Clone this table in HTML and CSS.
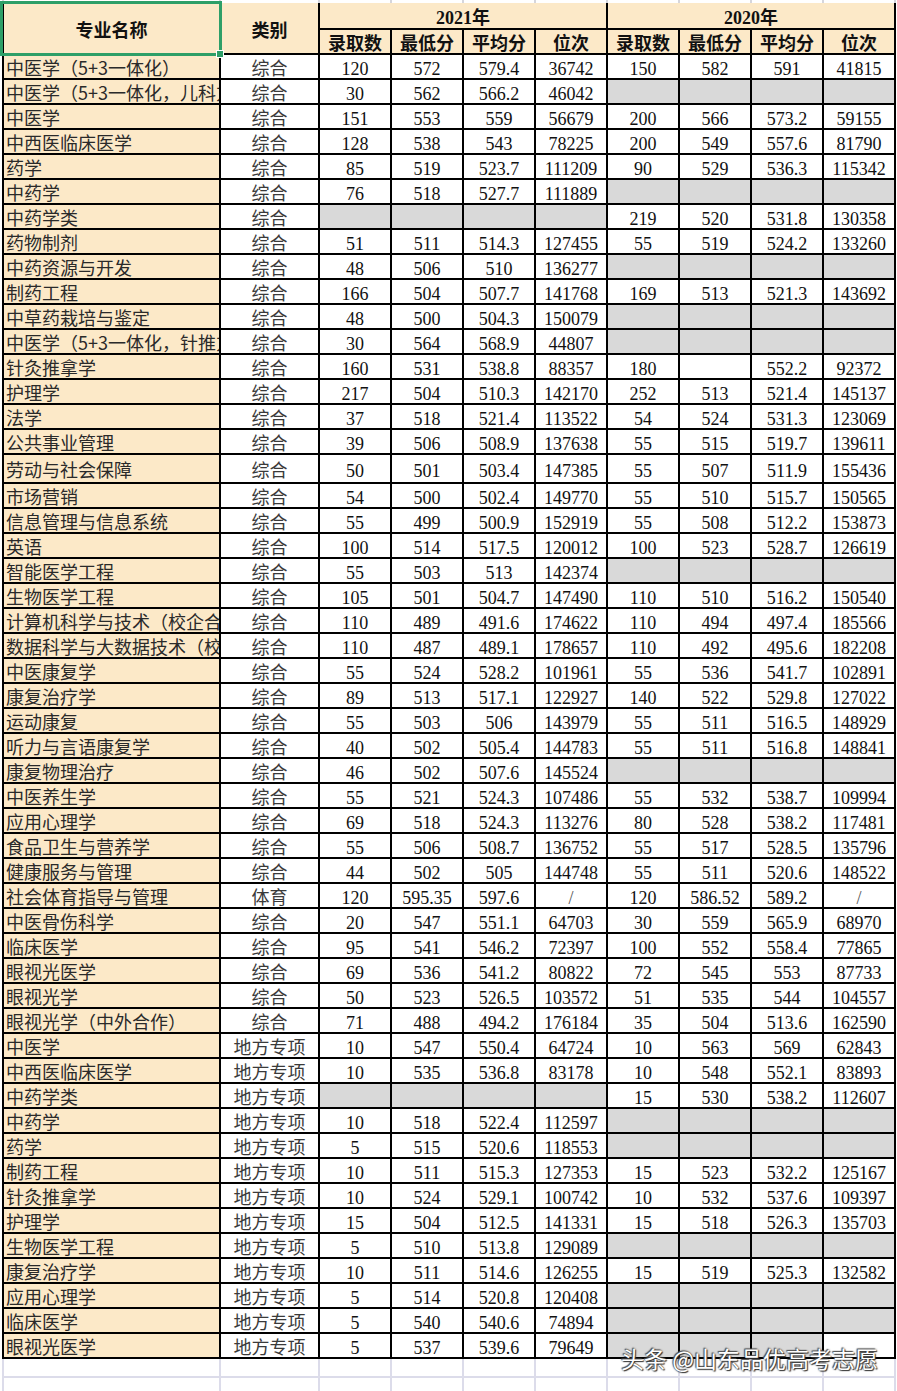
FILE: index.html
```html
<!DOCTYPE html>
<html lang="zh-CN">
<head>
<meta charset="utf-8">
<title>录取分数</title>
<link rel="stylesheet" href="styles.css">
</head>
<body>
<div class="sheet">
  <div class="edge-top"><div></div><div></div><div></div><div></div><div></div><div></div><div></div><div></div><div></div><div></div></div>
  <div class="table">
    <div class="hd r2">专业名称</div>
    <div class="hd r2">类别</div>
    <div class="hd c4">2021年</div>
    <div class="hd c4">2020年</div>
    <div class="hd">录取数</div><div class="hd">最低分</div><div class="hd">平均分</div><div class="hd">位次</div>
    <div class="hd">录取数</div><div class="hd">最低分</div><div class="hd">平均分</div><div class="hd">位次</div>

    <div class="n">中医学（5+3一体化）</div><div class="t">综合</div><div>120</div><div>572</div><div>579.4</div><div>36742</div><div>150</div><div>582</div><div>591</div><div>41815</div>
    <div class="n">中医学（5+3一体化，儿科方向）</div><div class="t">综合</div><div>30</div><div>562</div><div>566.2</div><div>46042</div><div class="g"></div><div class="g"></div><div class="g"></div><div class="g"></div>
    <div class="n">中医学</div><div class="t">综合</div><div>151</div><div>553</div><div>559</div><div>56679</div><div>200</div><div>566</div><div>573.2</div><div>59155</div>
    <div class="n">中西医临床医学</div><div class="t">综合</div><div>128</div><div>538</div><div>543</div><div>78225</div><div>200</div><div>549</div><div>557.6</div><div>81790</div>
    <div class="n">药学</div><div class="t">综合</div><div>85</div><div>519</div><div>523.7</div><div>111209</div><div>90</div><div>529</div><div>536.3</div><div>115342</div>
    <div class="n">中药学</div><div class="t">综合</div><div>76</div><div>518</div><div>527.7</div><div>111889</div><div class="g"></div><div class="g"></div><div class="g"></div><div class="g"></div>
    <div class="n">中药学类</div><div class="t">综合</div><div class="g"></div><div class="g"></div><div class="g"></div><div class="g"></div><div>219</div><div>520</div><div>531.8</div><div>130358</div>
    <div class="n">药物制剂</div><div class="t">综合</div><div>51</div><div>511</div><div>514.3</div><div>127455</div><div>55</div><div>519</div><div>524.2</div><div>133260</div>
    <div class="n">中药资源与开发</div><div class="t">综合</div><div>48</div><div>506</div><div>510</div><div>136277</div><div class="g"></div><div class="g"></div><div class="g"></div><div class="g"></div>
    <div class="n">制药工程</div><div class="t">综合</div><div>166</div><div>504</div><div>507.7</div><div>141768</div><div>169</div><div>513</div><div>521.3</div><div>143692</div>
    <div class="n">中草药栽培与鉴定</div><div class="t">综合</div><div>48</div><div>500</div><div>504.3</div><div>150079</div><div class="g"></div><div class="g"></div><div class="g"></div><div class="g"></div>
    <div class="n">中医学（5+3一体化，针推方向）</div><div class="t">综合</div><div>30</div><div>564</div><div>568.9</div><div>44807</div><div class="g"></div><div class="g"></div><div class="g"></div><div class="g"></div>
    <div class="n">针灸推拿学</div><div class="t">综合</div><div>160</div><div>531</div><div>538.8</div><div>88357</div><div>180</div><div></div><div>552.2</div><div>92372</div>
    <div class="n">护理学</div><div class="t">综合</div><div>217</div><div>504</div><div>510.3</div><div>142170</div><div>252</div><div>513</div><div>521.4</div><div>145137</div>
    <div class="n">法学</div><div class="t">综合</div><div>37</div><div>518</div><div>521.4</div><div>113522</div><div>54</div><div>524</div><div>531.3</div><div>123069</div>
    <div class="n">公共事业管理</div><div class="t">综合</div><div>39</div><div>506</div><div>508.9</div><div>137638</div><div>55</div><div>515</div><div>519.7</div><div>139611</div>
    <div class="n">劳动与社会保障</div><div class="t">综合</div><div>50</div><div>501</div><div>503.4</div><div>147385</div><div>55</div><div>507</div><div>511.9</div><div>155436</div>
    <div class="n">市场营销</div><div class="t">综合</div><div>54</div><div>500</div><div>502.4</div><div>149770</div><div>55</div><div>510</div><div>515.7</div><div>150565</div>
    <div class="n">信息管理与信息系统</div><div class="t">综合</div><div>55</div><div>499</div><div>500.9</div><div>152919</div><div>55</div><div>508</div><div>512.2</div><div>153873</div>
    <div class="n">英语</div><div class="t">综合</div><div>100</div><div>514</div><div>517.5</div><div>120012</div><div>100</div><div>523</div><div>528.7</div><div>126619</div>
    <div class="n">智能医学工程</div><div class="t">综合</div><div>55</div><div>503</div><div>513</div><div>142374</div><div class="g"></div><div class="g"></div><div class="g"></div><div class="g"></div>
    <div class="n">生物医学工程</div><div class="t">综合</div><div>105</div><div>501</div><div>504.7</div><div>147490</div><div>110</div><div>510</div><div>516.2</div><div>150540</div>
    <div class="n">计算机科学与技术（校企合作）</div><div class="t">综合</div><div>110</div><div>489</div><div>491.6</div><div>174622</div><div>110</div><div>494</div><div>497.4</div><div>185566</div>
    <div class="n">数据科学与大数据技术（校企合作）</div><div class="t">综合</div><div>110</div><div>487</div><div>489.1</div><div>178657</div><div>110</div><div>492</div><div>495.6</div><div>182208</div>
    <div class="n">中医康复学</div><div class="t">综合</div><div>55</div><div>524</div><div>528.2</div><div>101961</div><div>55</div><div>536</div><div>541.7</div><div>102891</div>
    <div class="n">康复治疗学</div><div class="t">综合</div><div>89</div><div>513</div><div>517.1</div><div>122927</div><div>140</div><div>522</div><div>529.8</div><div>127022</div>
    <div class="n">运动康复</div><div class="t">综合</div><div>55</div><div>503</div><div>506</div><div>143979</div><div>55</div><div>511</div><div>516.5</div><div>148929</div>
    <div class="n">听力与言语康复学</div><div class="t">综合</div><div>40</div><div>502</div><div>505.4</div><div>144783</div><div>55</div><div>511</div><div>516.8</div><div>148841</div>
    <div class="n">康复物理治疗</div><div class="t">综合</div><div>46</div><div>502</div><div>507.6</div><div>145524</div><div class="g"></div><div class="g"></div><div class="g"></div><div class="g"></div>
    <div class="n">中医养生学</div><div class="t">综合</div><div>55</div><div>521</div><div>524.3</div><div>107486</div><div>55</div><div>532</div><div>538.7</div><div>109994</div>
    <div class="n">应用心理学</div><div class="t">综合</div><div>69</div><div>518</div><div>524.3</div><div>113276</div><div>80</div><div>528</div><div>538.2</div><div>117481</div>
    <div class="n">食品卫生与营养学</div><div class="t">综合</div><div>55</div><div>506</div><div>508.7</div><div>136752</div><div>55</div><div>517</div><div>528.5</div><div>135796</div>
    <div class="n">健康服务与管理</div><div class="t">综合</div><div>44</div><div>502</div><div>505</div><div>144748</div><div>55</div><div>511</div><div>520.6</div><div>148522</div>
    <div class="n">社会体育指导与管理</div><div class="t">体育</div><div>120</div><div>595.35</div><div>597.6</div><div class="sl">/</div><div>120</div><div>586.52</div><div>589.2</div><div class="sl">/</div>
    <div class="n">中医骨伤科学</div><div class="t">综合</div><div>20</div><div>547</div><div>551.1</div><div>64703</div><div>30</div><div>559</div><div>565.9</div><div>68970</div>
    <div class="n">临床医学</div><div class="t">综合</div><div>95</div><div>541</div><div>546.2</div><div>72397</div><div>100</div><div>552</div><div>558.4</div><div>77865</div>
    <div class="n">眼视光医学</div><div class="t">综合</div><div>69</div><div>536</div><div>541.2</div><div>80822</div><div>72</div><div>545</div><div>553</div><div>87733</div>
    <div class="n">眼视光学</div><div class="t">综合</div><div>50</div><div>523</div><div>526.5</div><div>103572</div><div>51</div><div>535</div><div>544</div><div>104557</div>
    <div class="n">眼视光学（中外合作）</div><div class="t">综合</div><div>71</div><div>488</div><div>494.2</div><div>176184</div><div>35</div><div>504</div><div>513.6</div><div>162590</div>
    <div class="n">中医学</div><div class="t">地方专项</div><div>10</div><div>547</div><div>550.4</div><div>64724</div><div>10</div><div>563</div><div>569</div><div>62843</div>
    <div class="n">中西医临床医学</div><div class="t">地方专项</div><div>10</div><div>535</div><div>536.8</div><div>83178</div><div>10</div><div>548</div><div>552.1</div><div>83893</div>
    <div class="n">中药学类</div><div class="t">地方专项</div><div class="g"></div><div class="g"></div><div class="g"></div><div class="g"></div><div>15</div><div>530</div><div>538.2</div><div>112607</div>
    <div class="n">中药学</div><div class="t">地方专项</div><div>10</div><div>518</div><div>522.4</div><div>112597</div><div class="g"></div><div class="g"></div><div class="g"></div><div class="g"></div>
    <div class="n">药学</div><div class="t">地方专项</div><div>5</div><div>515</div><div>520.6</div><div>118553</div><div class="g"></div><div class="g"></div><div class="g"></div><div class="g"></div>
    <div class="n">制药工程</div><div class="t">地方专项</div><div>10</div><div>511</div><div>515.3</div><div>127353</div><div>15</div><div>523</div><div>532.2</div><div>125167</div>
    <div class="n">针灸推拿学</div><div class="t">地方专项</div><div>10</div><div>524</div><div>529.1</div><div>100742</div><div>10</div><div>532</div><div>537.6</div><div>109397</div>
    <div class="n">护理学</div><div class="t">地方专项</div><div>15</div><div>504</div><div>512.5</div><div>141331</div><div>15</div><div>518</div><div>526.3</div><div>135703</div>
    <div class="n">生物医学工程</div><div class="t">地方专项</div><div>5</div><div>510</div><div>513.8</div><div>129089</div><div class="g"></div><div class="g"></div><div class="g"></div><div class="g"></div>
    <div class="n">康复治疗学</div><div class="t">地方专项</div><div>10</div><div>511</div><div>514.6</div><div>126255</div><div>15</div><div>519</div><div>525.3</div><div>132582</div>
    <div class="n">应用心理学</div><div class="t">地方专项</div><div>5</div><div>514</div><div>520.8</div><div>120408</div><div class="g"></div><div class="g"></div><div class="g"></div><div class="g"></div>
    <div class="n">临床医学</div><div class="t">地方专项</div><div>5</div><div>540</div><div>540.6</div><div>74894</div><div class="g"></div><div class="g"></div><div class="g"></div><div class="g"></div>
    <div class="n">眼视光医学</div><div class="t">地方专项</div><div>5</div><div>537</div><div>539.6</div><div>79649</div><div class="g"></div><div class="g"></div><div class="g"></div><div></div>
  </div>
  <div class="edge-bottom">
    <div></div><div></div><div></div><div></div><div></div><div></div><div></div><div></div><div></div><div></div>
    <div></div><div></div><div></div><div></div><div></div><div></div><div></div><div></div><div></div><div></div>
  </div>
  <div class="sel"></div>
  <div class="wm">头条 @山东品优高考志愿</div>
</div>
</body>
</html>
```

FILE: styles.css
```css
* { box-sizing: border-box; }

body {
  margin: 0;
  background: #fff;
  font-family: "Liberation Serif", "Noto Sans CJK SC", serif;
}

.sheet {
  position: relative;
  width: 897px;
  overflow: hidden;
}

.edge-top,
.table,
.edge-bottom {
  display: grid;
  grid-template-columns: 215px 97px repeat(8, 70px);
  margin-left: 2px;
  width: 894px;
}

.edge-top {
  height: 3px;
  column-gap: 2px;
  padding: 0 2px;
  background: #d6d6dc;
}
.edge-top > div { background: #fff; }

.table {
  grid-template-rows: 25px 23px repeat(16, 23px) 27px;
  grid-auto-rows: 23px;
  gap: 2px;
  padding: 0 2px 2px;
  background: #000;
}

.table > div {
  background: #fff;
  display: flex;
  align-items: center;
  justify-content: center;
  padding-top: 4px;
  font-size: 18px;
  line-height: 20px;
  white-space: nowrap;
  color: #111;
}

.table > .n {
  background: #fce9c8;
  justify-content: flex-start;
  padding-top: 1px;
  padding-left: 2px;
  overflow-x: clip;
  overflow-y: visible;
  font-family: "Noto Sans CJK SC", sans-serif;
  color: #2a2a2a;
}

.table > .t {
  padding-top: 1px;
  font-family: "Noto Sans CJK SC", sans-serif;
  color: #3a3a3a;
}

.table > .g { background: #d9d9d9; }

.table > .sl { color: #555; }

.table > .hd {
  background: #fce9c8;
  font-weight: 700;
  color: #111;
  padding-top: 5px;
}
.table > .r2 { grid-row: span 2; }
.table > .c4 { grid-column: span 4; }

.edge-bottom {
  grid-template-rows: 17px 17px;
  gap: 2px;
  padding: 0 2px;
  background: #dcdcea;
}
.edge-bottom > div { background: #fff; }

.sel {
  position: absolute;
  left: 0;
  top: 1px;
  width: 222px;
  height: 55px;
  border: 3px solid #2e9f68;
}
.sel::after {
  content: "";
  position: absolute;
  right: -5px;
  bottom: -5px;
  width: 6px;
  height: 6px;
  background: #2e9f68;
  border: 1px solid #fff;
}

.wm {
  position: absolute;
  left: 621px;
  top: 1345px;
  font-family: "Noto Sans CJK SC", sans-serif;
  font-size: 23px;
  line-height: 26px;
  color: #fff;
  white-space: nowrap;
  text-shadow: 0 0 2px #333, 1px 1px 1px #333, -1px -1px 1px #555;
}
```
